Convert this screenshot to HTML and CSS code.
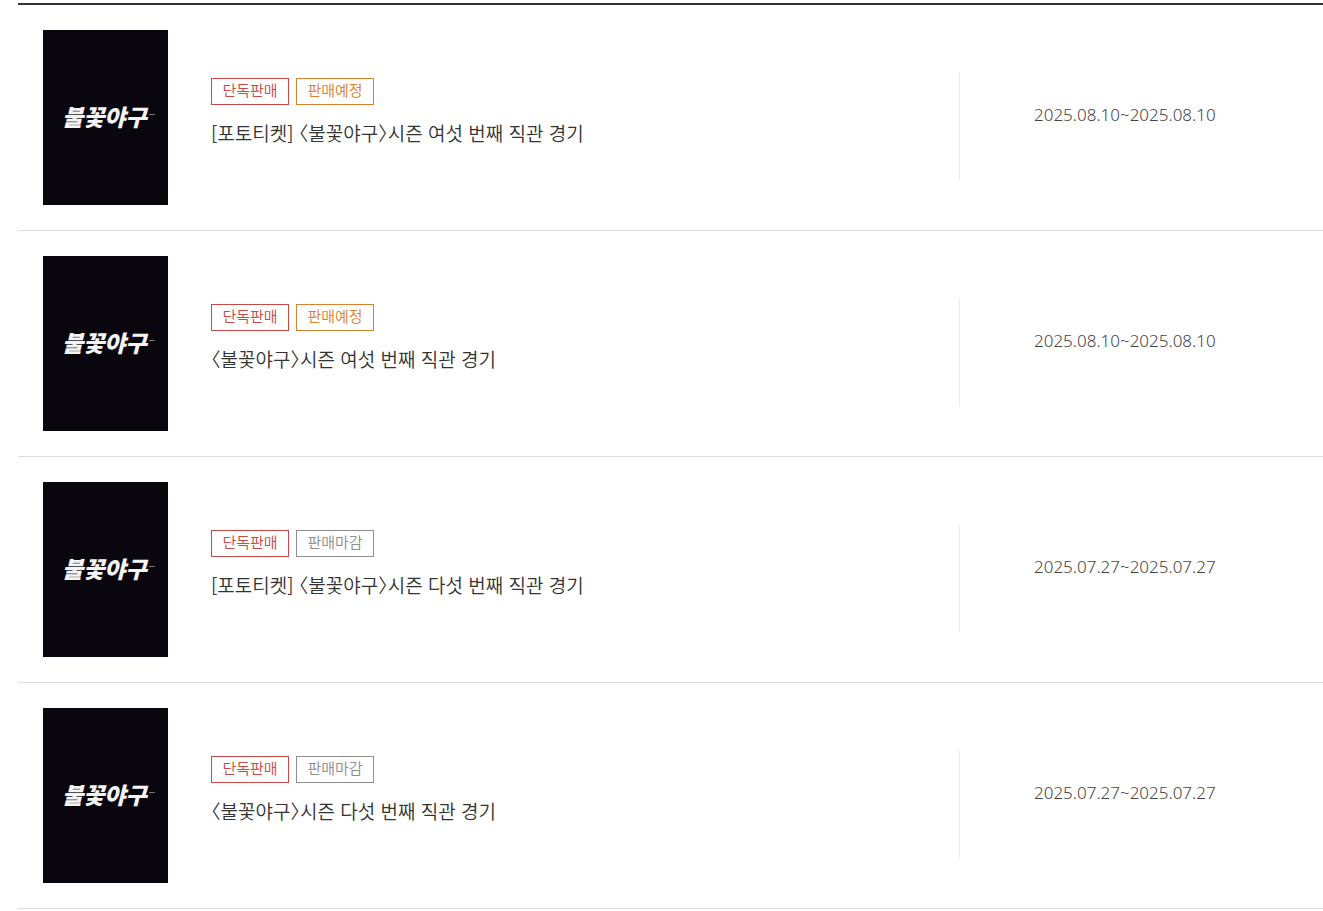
FILE: index.html
```html
<!DOCTYPE html>
<html lang="ko">

<head>
      <meta charset="UTF-8">
      <meta name="viewport" content="width=device-width, initial-scale=1.0">
      <title>불꽃야구</title>
      <link rel="stylesheet" href="styles.css">
</head>

<body>
      <!-- poster shared by all the rows -->
      <svg class="sprite" aria-hidden="true">
            <symbol id="poster" viewBox="0 0 125 175">
                  <rect width="125" height="175" fill="#09060e" />
                  <text class="poster-logo" x="19" y="96">불꽃야구</text>
                  <path d="M106 84.500H112" stroke="#77757a" stroke-width="1" />
            </symbol>
      </svg>

      <ul class="ticket-list">
            <li class="ticket">
                  <a class="poster" href="#" aria-label="불꽃야구 포스터"><svg><use href="#poster" /></svg></a>
                  <div class="info">
                        <div class="badges">
                              <span class="badge badge-only">단독판매</span>
                              <span class="badge badge-soon">판매예정</span>
                        </div>
                        <a class="title" href="#">[포토티켓] 〈불꽃야구〉시즌 여섯 번째 직관 경기</a>
                  </div>
                  <div class="period">2025.08.10~2025.08.10</div>
            </li>
            <li class="ticket">
                  <a class="poster" href="#" aria-label="불꽃야구 포스터"><svg><use href="#poster" /></svg></a>
                  <div class="info">
                        <div class="badges">
                              <span class="badge badge-only">단독판매</span>
                              <span class="badge badge-soon">판매예정</span>
                        </div>
                        <a class="title" href="#">〈불꽃야구〉시즌 여섯 번째 직관 경기</a>
                  </div>
                  <div class="period">2025.08.10~2025.08.10</div>
            </li>
            <li class="ticket">
                  <a class="poster" href="#" aria-label="불꽃야구 포스터"><svg><use href="#poster" /></svg></a>
                  <div class="info">
                        <div class="badges">
                              <span class="badge badge-only">단독판매</span>
                              <span class="badge badge-end">판매마감</span>
                        </div>
                        <a class="title" href="#">[포토티켓] 〈불꽃야구〉시즌 다섯 번째 직관 경기</a>
                  </div>
                  <div class="period">2025.07.27~2025.07.27</div>
            </li>
            <li class="ticket">
                  <a class="poster" href="#" aria-label="불꽃야구 포스터"><svg><use href="#poster" /></svg></a>
                  <div class="info">
                        <div class="badges">
                              <span class="badge badge-only">단독판매</span>
                              <span class="badge badge-end">판매마감</span>
                        </div>
                        <a class="title" href="#">〈불꽃야구〉시즌 다섯 번째 직관 경기</a>
                  </div>
                  <div class="period">2025.07.27~2025.07.27</div>
            </li>
      </ul>
</body>

</html>
```
FILE: styles.css
```css
* {
      box-sizing: border-box;
}

body {
      margin: 0;
      padding: 3px 0 0 18px;
      background-color: #fff;
      color: #333;
      font-family: "Noto Sans CJK KR", sans-serif;
      font-weight: 400;
}

.sprite {
      display: none;
}

/* Ticket list */
.ticket-list {
      margin: 0;
      padding: 0;
      list-style: none;
      border-top: 2px solid #333;
}

.ticket {
      display: flex;
      align-items: flex-start;
      padding: 25px 0 25px 25px;
      border-bottom: 1px solid #ddd;
}

.poster {
      flex: none;
      width: 125px;
      height: 175px;
}

.poster svg {
      display: block;
      width: 100%;
      height: 100%;
}

.poster-logo {
      fill: #f4f4f4;
      font-size: 23px;
      font-weight: 900;
      font-style: italic;
}

/* Badges and title */
.info {
      flex: 1;
      min-width: 0;
      padding: 48px 20px 0 43px;
}

.badges {
      display: flex;
      gap: 7px;
      margin-bottom: 14px;
}

.badge {
      width: 78px;
      height: 27px;
      border: 1px solid;
      font-size: 15px;
      font-weight: 350;
      line-height: 22px;
      text-align: center;
}

.badge-only {
      color: #c94747;
}

.badge-soon {
      color: #d9822f;
}

.badge-end {
      color: #8e8e8e;
}

.title {
      display: block;
      color: #333;
      font-size: 19px;
      font-weight: 350;
      line-height: 28px;
      text-decoration: none;
      font-feature-settings: "halt";
}

.title:hover {
      text-decoration: underline;
}

/* Sale period */
.period {
      flex: none;
      width: 364px;
      height: 107px;
      margin-top: 43px;
      padding: 30px 0 0 74px;
      border-left: 1px solid #ebebeb;
      color: #444;
      font-family: "Noto Sans", sans-serif;
      font-size: 17px;
      font-weight: 300;
      line-height: 24px;
}
```
